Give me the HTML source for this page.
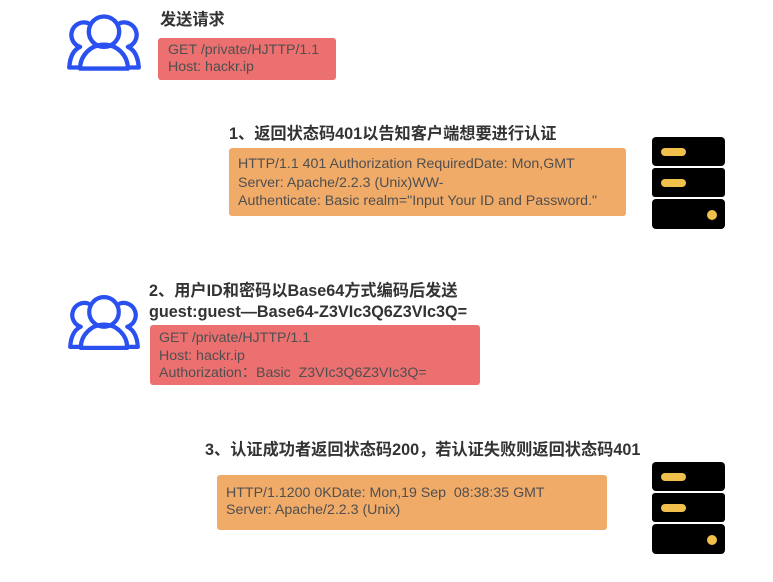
<!DOCTYPE html>
<html><head><meta charset="utf-8"><style>
body{margin:0;width:773px;height:582px;background:#fff;position:relative;overflow:hidden;font-family:"Liberation Sans","Noto Sans CJK SC",sans-serif;}
.a{position:absolute;}
.t{font-weight:bold;font-size:16.2px;color:#333;white-space:nowrap;}
.box{position:absolute;border-radius:3px;color:#4f4f4f;font-size:14.2px;line-height:17.5px;box-sizing:border-box;white-space:nowrap;}
.r{background:#ec7070;}
.o{background:#f1ab69;}
</style></head><body>
<svg class="a" style="left:66px;top:13px" width="76" height="58" viewBox="0 0 70 53" fill="none" stroke="#2a50f0" stroke-width="4" stroke-linecap="round" stroke-linejoin="round">
<circle cx="35" cy="17" r="14"/><path d="M13 51 A22 22 0 0 1 57 51 Z"/>
<path d="M20 9 A10 10 0 0 0 13 31 Q4 35 3 50 L13 50"/><path d="M50 9 A10 10 0 0 1 57 31 Q66 35 67 50 L57 50"/></svg>
<svg class="a" style="left:66px;top:294px" width="76" height="56" viewBox="0 0 70 53" fill="none" stroke="#2a50f0" stroke-width="4" stroke-linecap="round" stroke-linejoin="round">
<circle cx="35" cy="17" r="14"/><path d="M13 51 A22 22 0 0 1 57 51 Z"/>
<path d="M20 9 A10 10 0 0 0 13 31 Q4 35 3 50 L13 50"/><path d="M50 9 A10 10 0 0 1 57 31 Q66 35 67 50 L57 50"/></svg>

<div class="a t" style="left:160px;top:6px">发送请求</div>
<div class="box r" style="left:158px;top:38px;width:178px;height:42px;padding:4px 0 0 10px;line-height:17px">GET /private/HJTTP/1.1<br>Host: hackr.ip</div>

<div class="a t" style="left:229px;top:120px">1、返回状态码401以告知客户端想要进行认证</div>
<div class="box o" style="left:229px;top:148px;width:397px;height:68px;padding:7px 0 0 9px;line-height:18.5px">HTTP/1.1 401 Authorization RequiredDate: Mon,GMT<br>Server: Apache/2.2.3 (Unix)WW-<br>Authenticate: Basic realm="Input Your ID and Password."</div>

<div class="a t" style="left:149px;top:281px;line-height:21px">2、用户ID和密码以Base64方式编码后发送<br>guest:guest—Base64-Z3VIc3Q6Z3VIc3Q=</div>
<div class="box r" style="left:150px;top:325px;width:330px;height:60px;padding:5px 0 0 9px">GET /private/HJTTP/1.1<br>Host: hackr.ip<br>Authorization：Basic&nbsp; Z3VIc3Q6Z3VIc3Q=</div>

<div class="a t" style="left:205px;top:436px">3、认证成功者返回状态码200，若认证失败则返回状态码401</div>
<div class="box o" style="left:217px;top:475px;width:390px;height:55px;padding:10px 0 0 9px;line-height:17px">HTTP/1.1200 0KDate: Mon,19 Sep&nbsp; 08:38:35 GMT<br>Server: Apache/2.2.3 (Unix)</div>

<svg class="a" style="left:652px;top:137px" width="73" height="92" viewBox="0 0 73 92">
<rect x="0" y="0" width="73" height="29" rx="4" fill="#000"/><rect x="0" y="31" width="73" height="29" rx="3" fill="#000"/><rect x="0" y="62" width="73" height="30" rx="4" fill="#000"/>
<rect x="9" y="11" width="25" height="8" rx="4" fill="#f0bf4c"/><rect x="9" y="42" width="25" height="8" rx="4" fill="#f0bf4c"/><circle cx="60" cy="78" r="5" fill="#f0bf4c"/></svg>
<svg class="a" style="left:652px;top:462px" width="73" height="92" viewBox="0 0 73 92">
<rect x="0" y="0" width="73" height="29" rx="4" fill="#000"/><rect x="0" y="31" width="73" height="29" rx="3" fill="#000"/><rect x="0" y="62" width="73" height="30" rx="4" fill="#000"/>
<rect x="9" y="11" width="25" height="8" rx="4" fill="#f0bf4c"/><rect x="9" y="42" width="25" height="8" rx="4" fill="#f0bf4c"/><circle cx="60" cy="78" r="5" fill="#f0bf4c"/></svg>
</body></html>
